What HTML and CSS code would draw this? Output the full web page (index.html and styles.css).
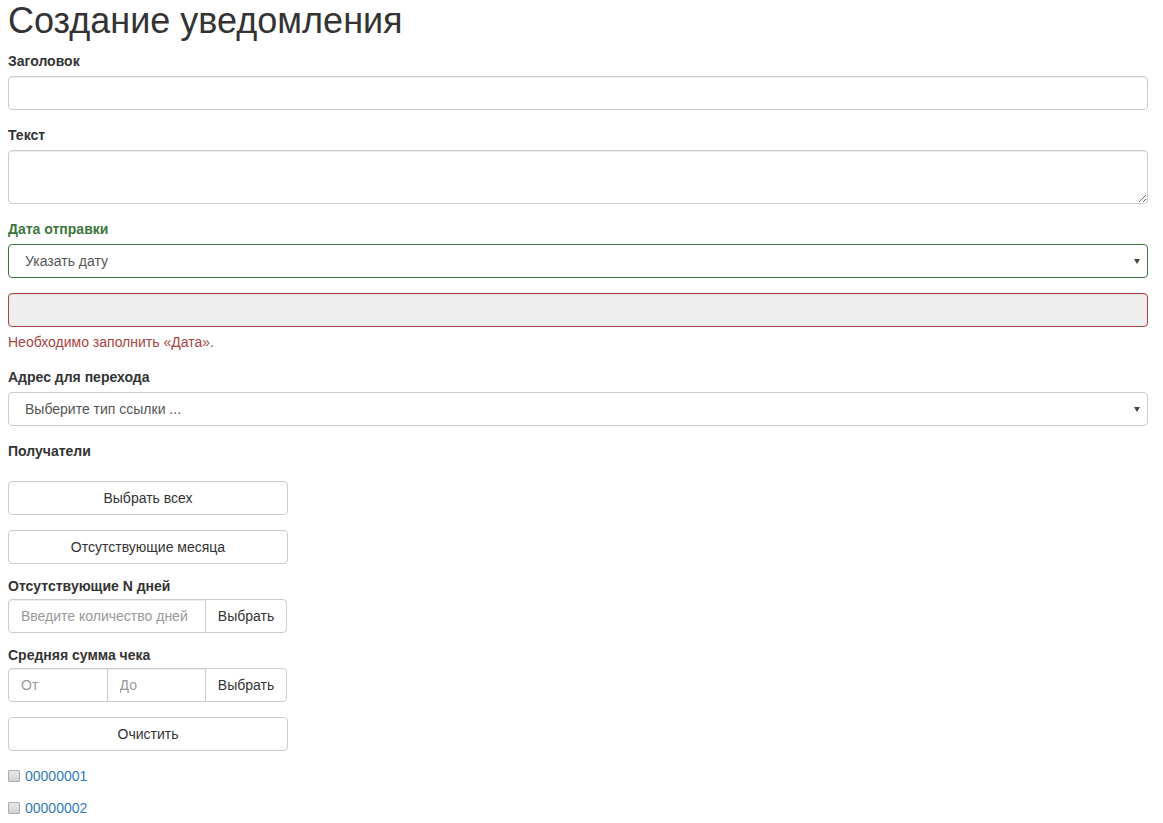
FILE: index.html
```html
<!DOCTYPE html>
<html lang="ru">
<head>
<meta charset="utf-8">
<title>Создание уведомления</title>
<link rel="stylesheet" href="styles.css">
</head>
<body>
<div class="page">
  <h1 class="title">Создание уведомления</h1>
  <form class="form">
    <div class="group">
      <label class="label">Заголовок</label>
      <input class="control" type="text">
    </div>
    <div class="group">
      <label class="label">Текст</label>
      <textarea class="control area" rows="2"></textarea>
    </div>
    <div class="group">
      <label class="label label-ok">Дата отправки</label>
      <div class="control select select-ok"><span>Указать дату</span><span class="caret"></span></div>
    </div>
    <div class="group group-err">
      <input class="control control-err" type="text" disabled>
      <div class="help-err">Необходимо заполнить «Дата».</div>
    </div>
    <div class="group">
      <label class="label">Адрес для перехода</label>
      <div class="control select"><span>Выберите тип ссылки ...</span><span class="caret"></span></div>
    </div>
    <div class="recipients">
      <label class="label label-gap">Получатели</label>
      <button type="button" class="btn btn-wide">Выбрать всех</button>
      <button type="button" class="btn btn-wide btn-mid">Отсутствующие месяца</button>
      <label class="label label-tight">Отсутствующие N дней</label>
      <div class="igroup">
        <input class="ig-input" type="text" placeholder="Введите количество дней">
        <button type="button" class="btn ig-btn">Выбрать</button>
      </div>
      <label class="label label-tight">Средняя сумма чека</label>
      <div class="igroup">
        <input class="ig-input" type="text" placeholder="От">
        <input class="ig-input" type="text" placeholder="До">
        <button type="button" class="btn ig-btn">Выбрать</button>
      </div>
      <button type="button" class="btn btn-wide btn-clear">Очистить</button>
      <div class="check"><input type="checkbox" class="cb"><a href="#" class="link">00000001</a></div>
      <div class="check check-next"><input type="checkbox" class="cb"><a href="#" class="link">00000002</a></div>
    </div>
  </form>
</div>
</body>
</html>
```

FILE: styles.css
```css
* { box-sizing: border-box; }
html, body { margin: 0; padding: 0; background: #fff; }
body {
  font-family: "Liberation Sans", Arial, sans-serif;
  font-size: 14px;
  line-height: 20px;
  color: #333;
}
.page { padding: 0 15px 0 8px; }
.title {
  margin: 1px 0 10px;
  font-size: 36px;
  font-weight: 500;
  line-height: 1.1;
  color: #333;
}
.form { display: flex; flex-direction: column; }
.group { display: flex; flex-direction: column; margin-bottom: 15px; }
.label {
  display: block;
  font-weight: 700;
  margin-bottom: 5px;
  line-height: 20px;
}
.label-tight { margin-bottom: 3px; }
.label-ok { color: #3c763d; }
.control {
  display: block;
  width: 100%;
  height: 34px;
  padding: 6px 12px;
  font-family: inherit;
  font-size: 14px;
  line-height: 20px;
  color: #555;
  background: #fff;
  border: 1px solid #ccc;
  border-radius: 4px;
  box-shadow: inset 0 1px 1px rgba(0,0,0,.075);
  outline: none;
}
.area { height: 54px; resize: vertical; }
.select {
  display: flex;
  align-items: center;
  justify-content: space-between;
  padding: 6px 7px 6px 16px;
  box-shadow: none;
}
.select-ok { border-color: #3c763d; }
.caret {
  width: 0; height: 0;
  border-left: 3px solid transparent;
  border-right: 3px solid transparent;
  border-top: 5px solid #444;
  margin-top: 1px;
}
.control-err {
  background: #eee;
  border-color: #a94442;
}
.group-err { margin-bottom: 15px; }
.help-err {
  color: #a94442;
  margin-top: 5px;
  line-height: 20px;
}
.recipients { display: flex; flex-direction: column; align-items: flex-start; }
.label-gap { margin-bottom: 20px; }
.btn {
  display: inline-block;
  height: 34px;
  padding: 6px 12px;
  font-family: inherit;
  font-size: 14px;
  line-height: 20px;
  color: #333;
  background: #fff;
  border: 1px solid #ccc;
  border-radius: 4px;
  text-align: center;
  cursor: pointer;
}
.btn-wide { width: 280px; }
.btn-mid { margin-top: 15px; margin-bottom: 12px; }
.igroup {
  display: flex;
  width: 279px;
  margin-bottom: 12px;
}
.ig-input {
  flex: 1 1 0;
  min-width: 0;
  height: 34px;
  padding: 6px 12px;
  font-family: inherit;
  font-size: 14px;
  color: #555;
  border: 1px solid #ccc;
  border-radius: 0;
  box-shadow: inset 0 1px 1px rgba(0,0,0,.075);
  outline: none;
  margin-left: -1px;
}
.ig-input:first-child { margin-left: 0; border-radius: 4px 0 0 4px; }
.ig-input::placeholder { color: #999; }
.ig-btn {
  flex: 0 0 auto;
  width: 82px;
  margin-left: -1px;
  border-radius: 0 4px 4px 0;
  padding: 6px 10px;
}
.btn-clear { margin-top: 3px; }
.check {
  display: flex;
  align-items: center;
  margin-top: 15px;
  line-height: 20px;
}
.check-next { margin-top: 12px; }
.cb {
  appearance: none;
  -webkit-appearance: none;
  width: 12px;
  height: 12px;
  margin: 0 5px 0 0;
  border: 1px solid #adadad;
  border-radius: 1px;
  background: linear-gradient(#e8e8e8, #d2d2d2);
}
.link { color: #337ab7; text-decoration: none; }
```
